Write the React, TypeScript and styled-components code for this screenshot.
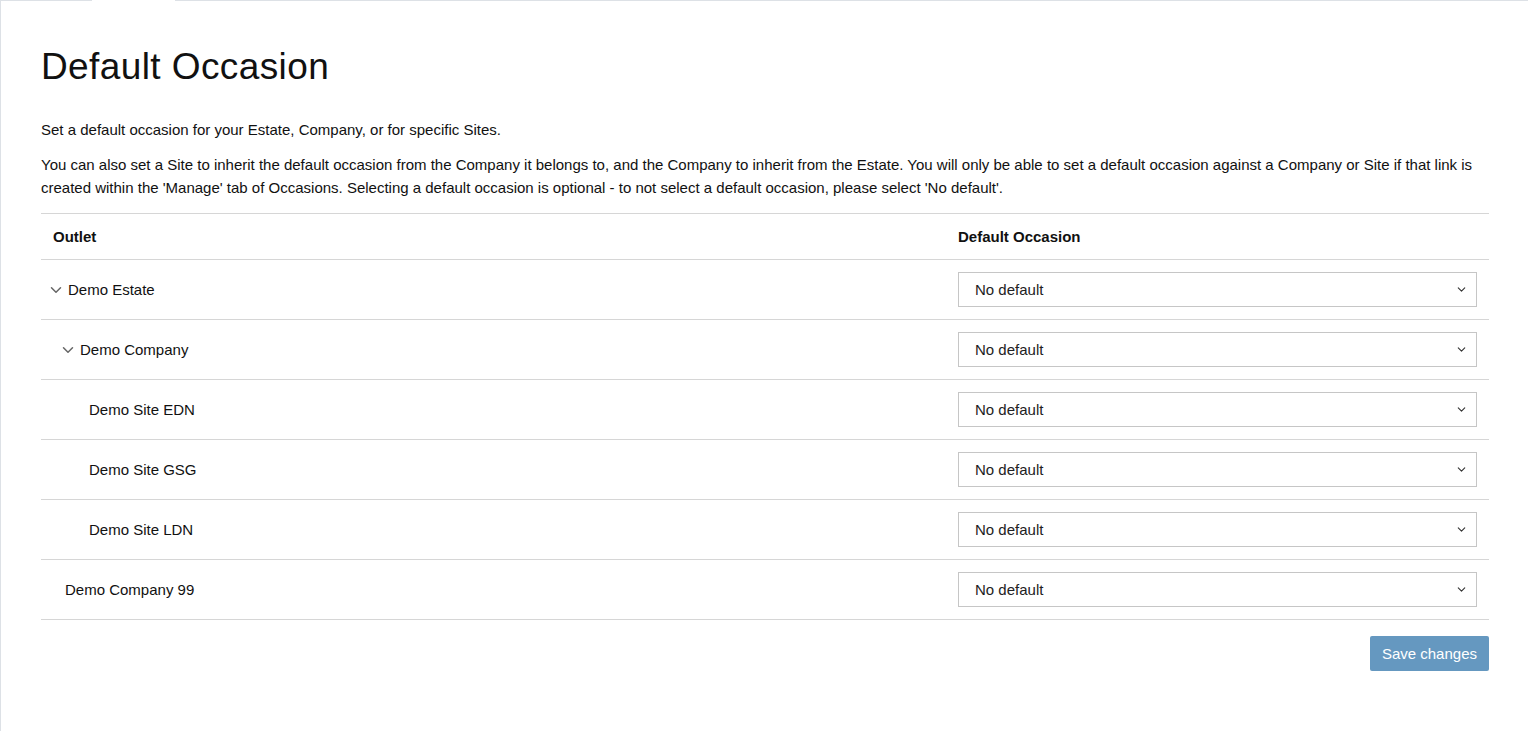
import React from "react";
import styled, { createGlobalStyle } from "styled-components";
import { ChevronDown } from "lucide-react";

const GlobalStyle = createGlobalStyle`
  html, body {
    margin: 0;
    padding: 0;
    background: #ffffff;
  }
  body {
    font-family: "Liberation Sans", Arial, sans-serif;
    color: #111111;
  }
`;

const Frame = styled.div`
  min-height: 731px;
  border-left: 1px solid #dde1e6;
  box-sizing: border-box;
`;

const TopEdge = styled.div`
  display: flex;
  gap: 83px;
`;

const Rule = styled.div<{ $width?: number }>`
  height: 1px;
  background: #dde1e6;
  ${({ $width }) => ($width ? `width: ${$width}px;` : "flex: 1;")}
`;

const Content = styled.div`
  padding: 41px 39px 40px 40px;
`;

const Title = styled.h1`
  margin: 0 0 26px;
  font-size: 37px;
  font-weight: 400;
  line-height: 50px;
  letter-spacing: 0.4px;
`;

const Text = styled.p`
  margin: 0 0 12px;
  font-size: 15px;
  line-height: 23px;
`;

const Table = styled.div`
  margin-top: 14px;
  border-top: 1px solid #d6d6d6;
`;

const Row = styled.div<{ $head?: boolean }>`
  display: grid;
  grid-template-columns: 905px 1fr;
  align-items: center;
  height: ${({ $head }) => ($head ? 45 : 59)}px;
  border-bottom: 1px solid #d6d6d6;
`;

const HeadCell = styled.div`
  padding: 0 12px;
  font-size: 15px;
  font-weight: 700;
`;

const OutletCell = styled.div<{ $indent: number }>`
  display: flex;
  align-items: center;
  gap: 3px;
  padding-left: ${({ $indent }) => $indent}px;
  font-size: 15px;
`;

const Toggle = styled.span`
  display: inline-flex;
  color: #666666;
`;

const SelectCell = styled.div`
  padding: 0 12px;
`;

const SelectBox = styled.div`
  position: relative;
`;

const Select = styled.select`
  appearance: none;
  width: 100%;
  height: 35px;
  padding: 0 30px 0 16px;
  border: 1px solid #c6c6c6;
  border-radius: 0;
  background: #ffffff;
  font-family: "Liberation Sans", Arial, sans-serif;
  font-size: 15px;
  color: #222222;
  outline: none;
`;

const SelectArrow = styled.span`
  position: absolute;
  right: 9px;
  top: 11px;
  display: inline-flex;
  color: #333333;
  pointer-events: none;
`;

const Actions = styled.div`
  display: flex;
  justify-content: flex-end;
  margin-top: 16px;
`;

const SaveButton = styled.button`
  height: 35px;
  padding: 0 12px;
  border: none;
  border-radius: 2px;
  background: #6598c0;
  color: #ffffff;
  font-family: "Liberation Sans", Arial, sans-serif;
  font-size: 15px;
  cursor: pointer;
`;

type Outlet = {
  name: string;
  indent: number;
  expandable?: boolean;
};

const outlets: Outlet[] = [
  { name: "Demo Estate", indent: 6, expandable: true },
  { name: "Demo Company", indent: 18, expandable: true },
  { name: "Demo Site EDN", indent: 48 },
  { name: "Demo Site GSG", indent: 48 },
  { name: "Demo Site LDN", indent: 48 },
  { name: "Demo Company 99", indent: 24 },
];

const OccasionSelect: React.FC = () => (
  <SelectBox>
    <Select defaultValue="none">
      <option value="none">No default</option>
    </Select>
    <SelectArrow>
      <ChevronDown size={13} strokeWidth={2} />
    </SelectArrow>
  </SelectBox>
);

const App: React.FC = () => {
  return (
    <>
      <GlobalStyle />
      <Frame>
        <TopEdge>
          <Rule $width={91} />
          <Rule />
        </TopEdge>
        <Content>
          <Title>Default Occasion</Title>
          <Text>Set a default occasion for your Estate, Company, or for specific Sites.</Text>
          <Text>
            You can also set a Site to inherit the default occasion from the Company it belongs to,
            and the Company to inherit from the Estate. You will only be able to set a default
            occasion against a Company or Site if that link is created within the 'Manage' tab of
            Occasions. Selecting a default occasion is optional - to not select a default occasion,
            please select 'No default'.
          </Text>
          <Table>
            <Row $head>
              <HeadCell>Outlet</HeadCell>
              <HeadCell>Default Occasion</HeadCell>
            </Row>
            {outlets.map((o) => (
              <Row key={o.name}>
                <OutletCell $indent={o.indent}>
                  {o.expandable && (
                    <Toggle>
                      <ChevronDown size={18} strokeWidth={2} />
                    </Toggle>
                  )}
                  {o.name}
                </OutletCell>
                <SelectCell>
                  <OccasionSelect />
                </SelectCell>
              </Row>
            ))}
          </Table>
          <Actions>
            <SaveButton>Save changes</SaveButton>
          </Actions>
        </Content>
      </Frame>
    </>
  );
};

export default App;
